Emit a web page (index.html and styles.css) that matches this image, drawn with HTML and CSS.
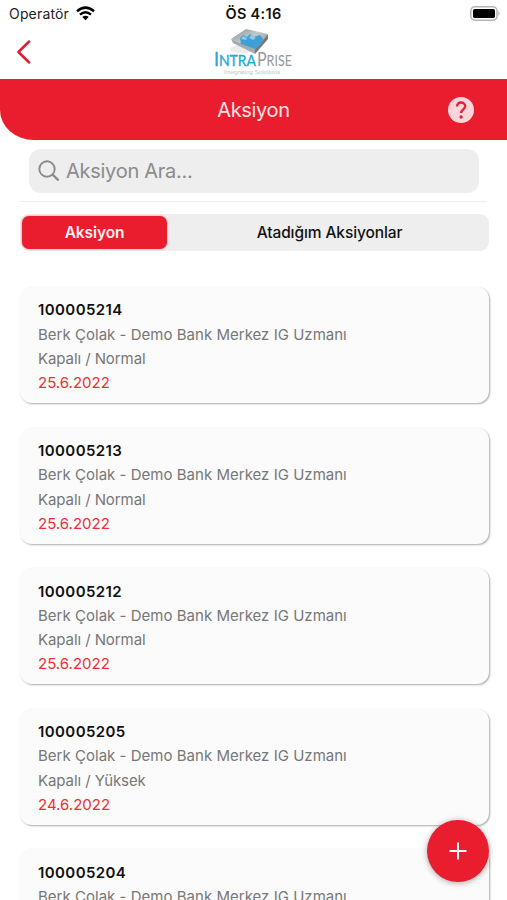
FILE: index.html
```html
<!DOCTYPE html>
<html lang="tr">
<head>
<meta charset="utf-8">
<title>Aksiyon</title>
<link rel="stylesheet" href="styles.css">
</head>
<body>
<div class="screen">
  <header class="top">
    <div class="top-left">
      <div class="carrier"><span>Operatör</span>
        <svg width="19" height="15" viewBox="0 0 19 15"><g fill="none" stroke="#000" stroke-width="2.5"><path d="M1 5.3Q9.500-2 18 5.300"/><path d="M4 8.600Q9.500 4 15 8.600"/></g><path d="M6.300 10.900Q9.500 8.600 12.700 10.900L9.500 14.200Z"/></svg>
      </div>
      <svg class="back" width="16" height="26" viewBox="0 0 16 26"><path d="M13.200 2.500 2.400 13 13.200 23.500" fill="none" stroke="#dc1f33" stroke-width="2.500" stroke-linecap="round" stroke-linejoin="round"/></svg>
    </div>
    <div class="top-center">
      <div class="clock">ÖS 4:16</div>
      <svg class="logo" width="82" height="50" viewBox="0 0 82 50">
        <defs><linearGradient id="slab" x1="0" y1="0" x2="1" y2="1"><stop offset="0" stop-color="#858b8f"/><stop offset=".45" stop-color="#c3c9cc"/><stop offset="1" stop-color="#85898c"/></linearGradient></defs>
        <ellipse cx="28" cy="22" rx="12" ry="4" fill="#ececed"/>
        <path d="M17 12 32 2 54 7 41 22Z" fill="url(#slab)"/>
        <path d="M17 12 41 22V27L19 16Z" fill="#a5aaad"/>
        <path d="M54 7V12L41 27V22Z" fill="#75797c"/>
        <path d="M26 11 29 8 33 10 36 7 40 10 46 8 49 12 47 17 41 22 27 17Z" fill="#3e9ed6"/>
        <path d="M29 9 33 11 32 13 27 12ZM37 8 42 11 39 13 35 11Z" fill="#8acced"/>
        <text class="wordmark" x="0" y="39" textLength="42" lengthAdjust="spacingAndGlyphs" fill="#22a7dd" stroke="#22a7dd" stroke-width=".3"><tspan class="cap">I</tspan>NTRA</text>
        <text class="wordmark" x="43" y="39" textLength="35" lengthAdjust="spacingAndGlyphs" fill="#96999b"><tspan class="cap">P</tspan>RISE</text>
        <text class="tagline" x="10" y="47" textLength="56" lengthAdjust="spacingAndGlyphs">Integrating Solutions</text>
      </svg>
    </div>
    <div class="top-right">
      <svg width="31" height="16" viewBox="0 0 31 16"><rect x=".8" y=".8" width="26.200" height="13.400" rx="4" fill="#fff" stroke="#b4b4b4" stroke-width="1.500"/><rect x="3" y="3" width="22" height="9" rx="1.800"/><path d="M28.500 5Q30.600 7.500 28.500 10Z" fill="#aaa"/></svg>
    </div>
  </header>
  <div class="banner">
    <h1>Aksiyon</h1>
    <svg class="help" width="26" height="26" viewBox="0 0 26 26"><circle cx="13" cy="13" r="13" fill="#fbd5d9"/><path d="M9 9.600C9 7 10.700 5.500 13 5.500S17.200 7 17.200 9.300C17.200 12.200 13.100 12.500 13.100 16" fill="none" stroke="#dd2337" stroke-width="2.400"/><circle cx="13.100" cy="20" r="1.700" fill="#dd2337"/></svg>
  </div>
  <div class="search">
    <svg width="22" height="22" viewBox="0 0 22 22" fill="none" stroke="#8b8b8d" stroke-width="1.900" stroke-linecap="round"><circle cx="9" cy="9" r="7.700"/><path d="M14.700 14.700 20 19.800" stroke-width="2.300"/></svg>
    <span>Aksiyon Ara...</span>
  </div>
  <div class="rule"></div>
  <nav class="tabs">
    <span class="tab active">Aksiyon</span>
    <span class="tab other">Atadığım Aksiyonlar</span>
  </nav>
  <main class="list">
    <article class="card"><b>100005214</b><p>Berk Çolak - Demo Bank Merkez IG Uzmanı</p><p class="state">Kapalı / Normal</p><time>25.6.2022</time></article>
    <article class="card"><b>100005213</b><p>Berk Çolak - Demo Bank Merkez IG Uzmanı</p><p class="state">Kapalı / Normal</p><time>25.6.2022</time></article>
    <article class="card"><b>100005212</b><p>Berk Çolak - Demo Bank Merkez IG Uzmanı</p><p class="state">Kapalı / Normal</p><time>25.6.2022</time></article>
    <article class="card"><b>100005205</b><p>Berk Çolak - Demo Bank Merkez IG Uzmanı</p><p class="state">Kapalı / Yüksek</p><time>24.6.2022</time></article>
    <article class="card"><b>100005204</b><p>Berk Çolak - Demo Bank Merkez IG Uzmanı</p></article>
  </main>
  <div class="fab"><svg width="18" height="18" viewBox="0 0 18 18"><path d="M9 .5V17.500M.5 9H17.500" stroke="#fff" stroke-width="2"/></svg></div>
</div>
</body>
</html>
```
FILE: styles.css
```css
* { box-sizing: border-box; }
body { margin: 0; background: #fff; font-family: Inter, "Liberation Sans", sans-serif; color: #111; }
svg { display: block; flex: none; }
h1, p { margin: 0; }
.screen { position: relative; width: 507px; height: 900px; overflow: hidden; }
.top { height: 79px; display: grid; grid-template-columns: 1fr 90px 1fr; }
.carrier { display: flex; gap: 7px; padding: 6px 0 0 9px; font-size: 14px; line-height: 16px; letter-spacing: .17px; color: #222; }
.back { margin: 17px 0 0 16px; }
.top-center { display: flex; flex-direction: column; align-items: center; }
.clock { padding-top: 5px; height: 27px; font-size: 14.5px; line-height: 18px; font-weight: 600; letter-spacing: .3px; white-space: nowrap; }
.logo { margin-left: 3px; overflow: visible; }
.wordmark { font-family: Lato, sans-serif; font-size: 14.5px; }
.cap { font-size: 18.5px; }
.tagline { font-family: "Liberation Sans", sans-serif; font-size: 5.5px; fill: #c4c4c4; }
.top-right { display: flex; justify-content: flex-end; padding: 6px 6px 0 0; }
.banner { height: 61px; display: grid; grid-template-columns: 60px 1fr 60px; align-items: center; background: #ea1d2f; border-bottom-left-radius: 34px 30px; padding-top: 1px; }
.banner h1 { grid-column: 2; text-align: center; font-size: 20px; line-height: 28px; font-weight: 400; letter-spacing: -.35px; color: #fde3e5; }
.help { margin-left: 1px; }
.search { margin: 9px 28px 0 29px; height: 44px; border-radius: 12px; background: #eee; display: flex; align-items: center; gap: 6px; padding-left: 9px; font-size: 20px; letter-spacing: -.27px; color: #8b8b8d; }
.rule { height: 1px; margin: 8px 20px 0; background: #ececec; }
.tabs { height: 37px; margin: 12px 18px 0 20px; border-radius: 9px; background: #eee; display: grid; grid-template-columns: 145px 1fr; padding: 2px; }
.tab { display: flex; align-items: center; justify-content: center; height: 33px; font-size: 15.5px; font-weight: 500; color: #111; }
.active { border-radius: 7px; background: #ea1d2f; color: #fff0f1; font-weight: 600; letter-spacing: -.1px; box-shadow: 0 0 2px #ea1d2f99; }
.other { letter-spacing: -.1px; padding-left: 5px; }
.list { display: flex; flex-direction: column; gap: 24.6px; margin: 36px 18px 0 20px; }
.card { flex: none; height: 116px; border-radius: 12px; background: #fbfbfb; box-shadow: 1px 1px 2px #aaa; padding: 11.4px 18px; font-size: 15px; line-height: 24.3px; display: flex; flex-direction: column; align-items: flex-start; white-space: nowrap; }
.card b { font-weight: 600; letter-spacing: .4px; }
.card p { color: #777; letter-spacing: .02px; }
.card .state { letter-spacing: -.08px; }
.card time { color: #ed2f34; }
.fab { position: absolute; left: 427px; top: 820px; width: 62px; height: 62px; border-radius: 50%; background: #ea1d2f; display: flex; align-items: center; justify-content: center; box-shadow: 0 1px 6px #0005; }
```
